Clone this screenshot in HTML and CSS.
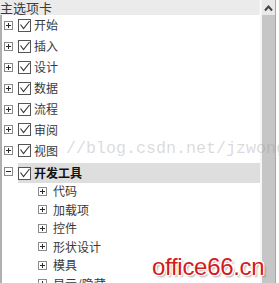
FILE: index.html
```html
<!DOCTYPE html>
<html lang="zh">
<head>
<meta charset="utf-8">
<link rel="stylesheet" href="styles.css">
</head>
<body>
<div class="frame">
  <div class="panel">
    <div class="header">主选项卡</div>
    <div class="tree">
      <div class="row">
        <svg class="exp" width="9" height="9" viewBox="0 0 9 9"><rect x="0.5" y="0.5" width="8" height="8"/><path d="M2 4.5H7M4.5 2V7"/></svg>
        <svg class="chk" width="13" height="13" viewBox="0 0 13 13"><rect x="0.5" y="0.5" width="12" height="12"/><polyline points="2.5,5.5 5.5,9.5 11.5,2"/></svg>
        <span class="label">开始</span>
      </div>
      <div class="row">
        <svg class="exp" width="9" height="9" viewBox="0 0 9 9"><rect x="0.5" y="0.5" width="8" height="8"/><path d="M2 4.5H7M4.5 2V7"/></svg>
        <svg class="chk" width="13" height="13" viewBox="0 0 13 13"><rect x="0.5" y="0.5" width="12" height="12"/><polyline points="2.5,5.5 5.5,9.5 11.5,2"/></svg>
        <span class="label">插入</span>
      </div>
      <div class="row">
        <svg class="exp" width="9" height="9" viewBox="0 0 9 9"><rect x="0.5" y="0.5" width="8" height="8"/><path d="M2 4.5H7M4.5 2V7"/></svg>
        <svg class="chk" width="13" height="13" viewBox="0 0 13 13"><rect x="0.5" y="0.5" width="12" height="12"/><polyline points="2.5,5.5 5.5,9.5 11.5,2"/></svg>
        <span class="label">设计</span>
      </div>
      <div class="row">
        <svg class="exp" width="9" height="9" viewBox="0 0 9 9"><rect x="0.5" y="0.5" width="8" height="8"/><path d="M2 4.5H7M4.5 2V7"/></svg>
        <svg class="chk" width="13" height="13" viewBox="0 0 13 13"><rect x="0.5" y="0.5" width="12" height="12"/><polyline points="2.5,5.5 5.5,9.5 11.5,2"/></svg>
        <span class="label">数据</span>
      </div>
      <div class="row">
        <svg class="exp" width="9" height="9" viewBox="0 0 9 9"><rect x="0.5" y="0.5" width="8" height="8"/><path d="M2 4.5H7M4.5 2V7"/></svg>
        <svg class="chk" width="13" height="13" viewBox="0 0 13 13"><rect x="0.5" y="0.5" width="12" height="12"/><polyline points="2.5,5.5 5.5,9.5 11.5,2"/></svg>
        <span class="label">流程</span>
      </div>
      <div class="row">
        <svg class="exp" width="9" height="9" viewBox="0 0 9 9"><rect x="0.5" y="0.5" width="8" height="8"/><path d="M2 4.5H7M4.5 2V7"/></svg>
        <svg class="chk" width="13" height="13" viewBox="0 0 13 13"><rect x="0.5" y="0.5" width="12" height="12"/><polyline points="2.5,5.5 5.5,9.5 11.5,2"/></svg>
        <span class="label">审阅</span>
      </div>
      <div class="row">
        <svg class="exp" width="9" height="9" viewBox="0 0 9 9"><rect x="0.5" y="0.5" width="8" height="8"/><path d="M2 4.5H7M4.5 2V7"/></svg>
        <svg class="chk" width="13" height="13" viewBox="0 0 13 13"><rect x="0.5" y="0.5" width="12" height="12"/><polyline points="2.5,5.5 5.5,9.5 11.5,2"/></svg>
        <span class="label">视图</span>
      </div>
      <div class="row selected">
        <svg class="exp" width="9" height="9" viewBox="0 0 9 9"><rect x="0.5" y="0.5" width="8" height="8"/><path d="M2 4.5H7"/></svg>
        <div class="sel">
          <svg class="chk" width="13" height="13" viewBox="0 0 13 13"><rect x="0.5" y="0.5" width="12" height="12"/><polyline points="2.5,5.5 5.5,9.5 11.5,2"/></svg>
          <span class="label bold">开发工具</span>
        </div>
      </div>
      <div class="sub">
        <svg class="exp" width="9" height="9" viewBox="0 0 9 9"><rect x="0.5" y="0.5" width="8" height="8"/><path d="M2 4.5H7M4.5 2V7"/></svg>
        <span class="label">代码</span>
      </div>
      <div class="sub">
        <svg class="exp" width="9" height="9" viewBox="0 0 9 9"><rect x="0.5" y="0.5" width="8" height="8"/><path d="M2 4.5H7M4.5 2V7"/></svg>
        <span class="label">加载项</span>
      </div>
      <div class="sub">
        <svg class="exp" width="9" height="9" viewBox="0 0 9 9"><rect x="0.5" y="0.5" width="8" height="8"/><path d="M2 4.5H7M4.5 2V7"/></svg>
        <span class="label">控件</span>
      </div>
      <div class="sub">
        <svg class="exp" width="9" height="9" viewBox="0 0 9 9"><rect x="0.5" y="0.5" width="8" height="8"/><path d="M2 4.5H7M4.5 2V7"/></svg>
        <span class="label">形状设计</span>
      </div>
      <div class="sub">
        <svg class="exp" width="9" height="9" viewBox="0 0 9 9"><rect x="0.5" y="0.5" width="8" height="8"/><path d="M2 4.5H7M4.5 2V7"/></svg>
        <span class="label">模具</span>
      </div>
      <div class="sub">
        <svg class="exp" width="9" height="9" viewBox="0 0 9 9"><rect x="0.5" y="0.5" width="8" height="8"/><path d="M2 4.5H7M4.5 2V7"/></svg>
        <span class="label">显示/隐藏</span>
      </div>
    </div>
  </div>
  <div class="scrollbar">
    <div class="arrow">
      <svg width="9" height="8" viewBox="0 0 9 8"><path d="M1 6.5L4.5 2.5L8 6.5"/></svg>
    </div>
    <div class="thumb"></div>
  </div>
  <div class="wm-url">//blog.csdn.net/jzwong</div>
  <div class="wm-logo">office66.cn</div>
</div>
</body>
</html>
```

FILE: styles.css
```css
html, body {
  margin: 0;
  padding: 0;
  background: #ffffff;
}

.frame {
  position: relative;
  width: 279px;
  height: 283px;
  overflow: hidden;
  display: flex;
  font-family: "Noto Sans CJK SC", "Noto Sans", sans-serif;
  color: #3a3a3a;
}

.panel {
  width: 260px;
  display: flex;
  flex-direction: column;
}

.header {
  height: 15px;
  background: #ebebeb;
  font-size: 13px;
  line-height: 15px;
  color: #3c3c3c;
  border-right: 1px solid #f2f2f2;
}

.tree {
  flex: 1;
  border-left: 2px solid #b0b0b0;
  display: flex;
  flex-direction: column;
}

.row {
  height: 20.9px;
  display: flex;
  align-items: center;
  padding-left: 2px;
}

.sub {
  height: 18.5px;
  display: flex;
  align-items: center;
  padding-left: 36px;
}

.exp {
  flex: none;
  margin-right: 5px;
}

.exp rect {
  fill: #ffffff;
  stroke: #8a8a8a;
  stroke-width: 1;
}

.exp path {
  stroke: #2a2a2a;
  stroke-width: 1;
  fill: none;
}

.sub .exp {
  margin-right: 6px;
}

.chk {
  flex: none;
  margin-right: 3px;
}

.chk rect {
  fill: #ffffff;
  stroke: #555555;
  stroke-width: 1;
}

.chk polyline {
  fill: none;
  stroke: #333333;
  stroke-width: 1.1;
}

.label {
  font-size: 12px;
  line-height: 14px;
  white-space: nowrap;
}

.bold {
  font-weight: bold;
  color: #111111;
}

.sel {
  flex: 1;
  align-self: stretch;
  display: flex;
  align-items: center;
  background: #dedede;
  margin-top: 2px;
  margin-bottom: -1px;
}

.scrollbar {
  width: 19px;
  display: flex;
  flex-direction: column;
  border-left: 2px solid #f6f6f6;
  box-sizing: border-box;
  padding-right: 4px;
  background: linear-gradient(to right, transparent 13px, #a9a9a9 13px, #a9a9a9 14px, #ffffff 14px);
}

.arrow {
  height: 15px;
  background: #e9e9e9;
  display: flex;
  align-items: center;
  justify-content: center;
  width: 13px;
}

.arrow path {
  fill: none;
  stroke: #444444;
  stroke-width: 2;
}

.thumb {
  flex: 1;
  width: 13px;
  background: #c6c6c6;
}

.wm-url {
  position: absolute;
  left: 66px;
  top: 140px;
  font-family: "Liberation Mono", monospace;
  font-size: 16.67px;
  line-height: 18px;
  color: rgba(150, 150, 150, 0.35);
  white-space: nowrap;
}

.wm-logo {
  position: absolute;
  left: 152px;
  top: 254px;
  font-family: "Liberation Sans", Arial, sans-serif;
  font-size: 24px;
  line-height: 26px;
  letter-spacing: -0.3px;
  color: #d41a22;
  text-shadow:
    1px 0 0 #ffffff, -1px 0 0 #ffffff, 0 1px 0 #ffffff, 0 -1px 0 #ffffff,
    1px 1px 0 #ffffff, -1px -1px 0 #ffffff, 1px -1px 0 #ffffff, -1px 1px 0 #ffffff,
    2px 2px 2px rgba(0, 0, 0, 0.35);
  white-space: nowrap;
}
```
